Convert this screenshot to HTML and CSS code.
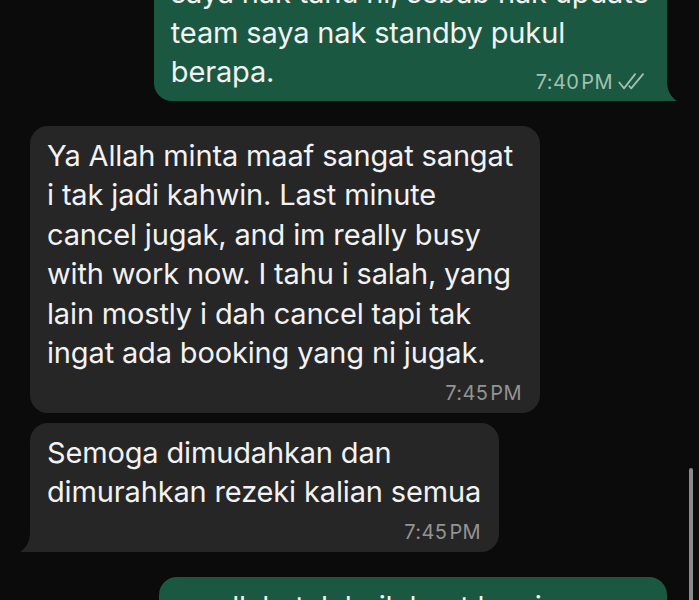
FILE: index.html
```html
<!DOCTYPE html>
<html lang="ms">
<head>
<meta charset="utf-8">
<title>Chat</title>
<link rel="stylesheet" href="styles.css">
</head>
<body>
<main class="thread">
  <section class="group group--out">
    <div class="bubble bubble--out">
      <p class="text">saya nak tahu ni, sebab nak update<br>team saya nak standby pukul<br>berapa.</p>
      <div class="meta meta--inline">
        <span class="time">7:40 PM</span>
        <svg class="ticks" viewBox="0 0 30 18" width="32" height="19" aria-hidden="true">
          <path d="M2 10 L6.5 15.5 L17 2" />
          <path d="M11.5 13.5 L13.3 15.5 L24.5 2" />
        </svg>
      </div>
      <svg class="tail tail--right" viewBox="0 0 30 20" width="30" height="20" aria-hidden="true">
        <path d="M20 0 C20 10 24 16 30 20 L0 20 L0 0 Z" />
      </svg>
    </div>
  </section>

  <section class="group group--in">
    <div class="bubble bubble--in bubble--wide">
      <p class="text">Ya Allah minta maaf sangat sangat<br>i tak jadi kahwin. Last minute<br>cancel jugak, and im really busy<br>with work now. I tahu i salah, yang<br>lain mostly i dah cancel tapi tak<br>ingat ada booking yang ni jugak.</p>
      <div class="meta"><span class="time">7:45 PM</span></div>
    </div>
    <div class="bubble bubble--in">
      <p class="text">Semoga dimudahkan dan<br>dimurahkan rezeki kalian semua</p>
      <div class="meta"><span class="time">7:45 PM</span></div>
      <svg class="tail tail--left" viewBox="0 0 30 20" width="30" height="20" aria-hidden="true">
        <path d="M10 0 C10 10 6 16 0 20 L30 20 L30 0 Z" />
      </svg>
    </div>
  </section>

  <section class="group group--out">
    <div class="bubble bubble--out">
      <p class="text">ya allah, tak baik buat kami macam<br>ni...</p>
    </div>
  </section>
</main>
<div class="scrollbar" aria-hidden="true"></div>
</body>
</html>
```

FILE: styles.css
```css
* { box-sizing: border-box; }

html, body {
  margin: 0;
  padding: 0;
  height: 600px;
  overflow: hidden;
  background: #0b0b0b;
}

body {
  font-family: Inter, "Noto Sans", "Liberation Sans", sans-serif;
  color: #f2f2f2;
  position: relative;
}

.thread {
  display: flex;
  flex-direction: column;
  gap: 25px;
  margin-top: -37px;
  padding: 0 32px 0 30px;
}

.group {
  display: flex;
  flex-direction: column;
  gap: 10px;
}

.group--out { align-items: flex-end; }
.group--in { align-items: flex-start; }

.bubble {
  position: relative;
  width: fit-content;
  border-radius: 18px;
  padding: 10px 18px 8px 17px;
}

.bubble--out { background: #1b5841; }
.bubble--in { background: #262626; }
.bubble--wide { width: 510px; }

.text {
  margin: 0;
  font-size: 29px;
  line-height: 39.5px;
  letter-spacing: -0.15px;
  white-space: nowrap;
}

.meta {
  display: flex;
  justify-content: flex-end;
  align-items: center;
  gap: 4px;
  height: 24px;
  margin-top: 8px;
}

.meta--inline {
  margin-top: -22px;
}

.bubble--out:has(.meta--inline) { padding-bottom: 7px; }

.time {
  font-size: 20px;
  line-height: 24px;
  color: #939393;
  letter-spacing: 0.4px;
  word-spacing: -4px;
}

.bubble--out .time { color: #a0c2b2; }

.ticks {
  fill: none;
  stroke: #a0c2b2;
  stroke-width: 1.7;
  stroke-linecap: round;
  stroke-linejoin: round;
}

.tail {
  position: absolute;
  bottom: 0;
}

.tail--left { left: -10px; fill: #262626; }
.tail--right { right: -10px; fill: #1b5841; }

.scrollbar {
  position: absolute;
  right: 6px;
  top: 468px;
  width: 4px;
  height: 140px;
  border-radius: 2px;
  background: #8a8a8a;
}
```
